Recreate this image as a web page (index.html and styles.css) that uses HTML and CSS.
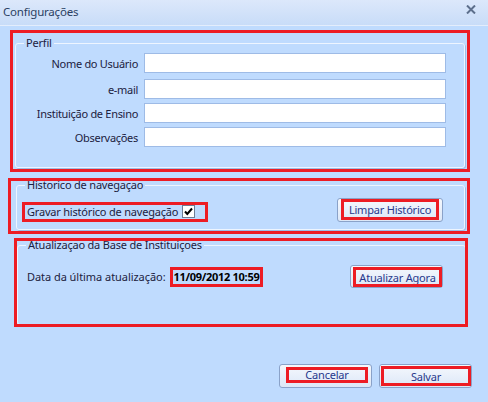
FILE: index.html
```html
<!DOCTYPE html>
<html lang="pt">
<head>
<meta charset="utf-8">
<title>Configurações</title>
<link rel="stylesheet" href="styles.css">
</head>
<body>
<div class="titlebar">
  <span class="title">Configurações</span>
  <svg class="close" width="10" height="9" viewBox="0 0 10 9"><path d="M1 0.5 L9 8.5 M9 0.5 L1 8.5" stroke="#5d6f8c" stroke-width="2"/></svg>
</div>

<section class="mark sec sec-perfil">
  <fieldset class="group group-perfil">
    <legend>Perfil</legend>
    <div class="form">
      <label class="lbl first">Nome do Usuário</label><div class="field first"></div>
      <label class="lbl">e-mail</label><div class="field"></div>
      <label class="lbl">Instituição de Ensino</label><div class="field"></div>
      <label class="lbl">Observações</label><div class="field"></div>
    </div>
  </fieldset>
</section>

<section class="mark sec sec-hist">
  <fieldset class="group group-hist">
    <legend>Historico de navegaçao</legend>
    <div class="row row-hist">
      <span class="mark chk-label">Gravar histórico de navegação
        <span class="chk"><svg width="11" height="11" viewBox="0 0 11 11"><path d="M2 5.5 L4.3 8 L9 2.5" fill="none" stroke="#000" stroke-width="2"/></svg></span>
      </span>
      <button class="btn btn-limpar"><span class="mark inner">Limpar Histórico</span></button>
    </div>
  </fieldset>
</section>

<section class="mark sec sec-atual">
  <fieldset class="group group-atual">
    <legend>Atualizaçao da Base de Instituiçoes</legend>
    <div class="row row-atual">
      <span class="date-lbl">Data da última atualização:</span>
      <span class="mark date">11/09/2012 10:59</span>
      <button class="btn btn-atual"><span class="mark inner">Atualizar Agora</span></button>
    </div>
  </fieldset>
</section>

<div class="footer">
  <button class="btn btn-foot btn-cancel"><span class="mark inner">Cancelar</span></button>
  <button class="btn btn-foot btn-save"><span class="mark inner">Salvar</span></button>
</div>
</body>
</html>
```

FILE: styles.css
```css
html, body {
  margin: 0;
  padding: 0;
}
body {
  width: 488px;
  height: 402px;
  overflow: hidden;
  background: #bfdbfe;
  font-family: "Noto Sans", "DejaVu Sans", sans-serif;
  font-size: 11px;
  letter-spacing: -0.2px;
  color: #1c2140;
}
.titlebar {
  height: 26px;
  border-bottom: 1px solid #e3edfc;
  background: linear-gradient(#dce8fb, #c8dcf8);
  display: flex;
  align-items: center;
  justify-content: space-between;
  padding: 0 12px 2px 3px;
  box-sizing: border-box;
}
.title {
  color: #2b3f62;
  font-size: 11.5px;
}
.close {
  display: block;
  margin-top: -4px;
}
.mark {
  outline: 3px solid #ed1c24;
  outline-offset: -3px;
}
.sec {
  box-sizing: border-box;
}
.group {
  margin: 0;
  padding: 0;
  border: 1px solid #eef5ff;
  border-radius: 3px;
  box-shadow: 1px 1px 0 #9fbce4;
  box-sizing: border-box;
  min-width: 0;
}
.group legend {
  margin-left: 8px;
  padding: 0 2px;
  line-height: 14px;
  height: 14px;
}
.sec-perfil {
  margin: 4px 0 0 10px;
  width: 460px;
  height: 142px;
  padding: 6px 0 0 5px;
}
.group-perfil {
  width: 450px;
  height: 132px;
}
.form {
  display: grid;
  grid-template-columns: 122px 302px;
  column-gap: 6px;
  row-gap: 4px;
  padding-top: 3px;
}
.lbl {
  text-align: right;
  align-self: center;
  letter-spacing: -0.3px;
}
.lbl.first, .field.first {
  margin-bottom: 2px;
}
.field {
  height: 20px;
  box-sizing: border-box;
  background: #fff;
  border: 1px solid #9ebbe6;
}
.row {
  display: flex;
  align-items: center;
}
.sec-hist {
  margin: 6px 0 0 8px;
  width: 462px;
  height: 56px;
  padding: 0 0 0 8px;
}
.group-hist {
  width: 449px;
  height: 52px;
}
.row-hist {
  padding: 6px 21px 0 5px;
}
.chk-label {
  display: inline-flex;
  align-items: center;
  height: 20px;
  margin-top: 3px;
  padding: 0 13px 0 5px;
  gap: 4px;
}
.chk {
  width: 13px;
  height: 13px;
  box-sizing: border-box;
  border: 1px solid #6d7d96;
  background: #fff;
  display: inline-flex;
  align-items: center;
  justify-content: center;
}
.chk svg {
  display: block;
}
.btn {
  font: inherit;
  letter-spacing: -0.2px;
  color: #27388c;
  border: 1px solid #8aa2c9;
  border-radius: 3px;
  background: linear-gradient(#f5f8fd, #dce7f7);
  padding: 0;
  box-sizing: border-box;
  display: flex;
  cursor: default;
}
.btn .inner {
  display: flex;
  align-items: center;
  justify-content: center;
}
.btn-limpar {
  margin-left: auto;
  width: 106px;
  height: 24px;
}
.btn-limpar .inner {
  width: 98px;
  height: 21px;
  margin: 0 0 0 3px;
}
.sec-atual {
  margin: 6px 0 0 14px;
  width: 454px;
  height: 89px;
  padding: 0 0 0 3px;
}
.group-atual {
  width: 449px;
  height: 87px;
  margin-top: -2px;
}
.row-atual {
  padding: 13px 22px 0 9px;
}
.date-lbl {
  letter-spacing: -0.05px;
}
.date {
  margin-left: 4px;
  height: 20px;
  padding: 0 4px 0 4px;
  display: inline-flex;
  align-items: center;
  font-weight: bold;
  letter-spacing: -0.3px;
  color: #000;
}
.btn-atual {
  margin-left: auto;
  width: 93px;
  height: 23px;
}
.btn-atual .inner {
  width: 89px;
  height: 20px;
  margin: 1px 0 0 2px;
}
.footer {
  display: flex;
  justify-content: flex-end;
  gap: 7px;
  margin-top: 37px;
  padding-right: 16px;
}
.btn-foot {
  width: 93px;
  height: 24px;
}
.btn-cancel .inner {
  width: 82px;
  height: 16px;
  line-height: 16px;
  margin: 2px 0 0 6px;
}
.btn-save .inner {
  width: 91px;
  height: 20px;
  margin: 1px 0 0 1px;
}
```
